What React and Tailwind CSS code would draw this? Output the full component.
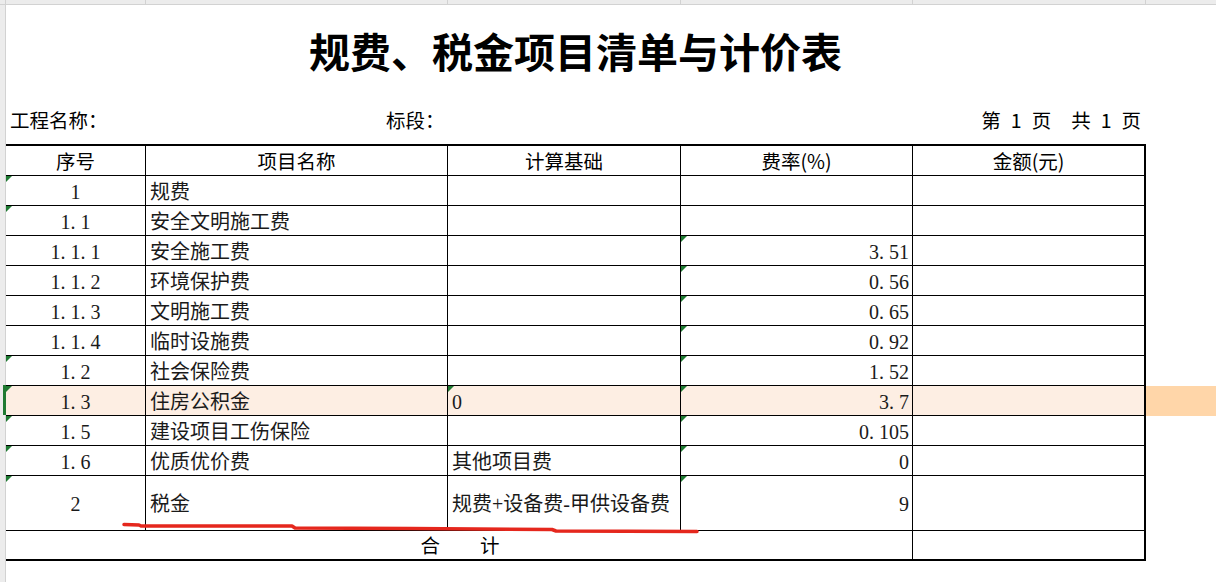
import React from 'react'

// column widths (each includes its right border)
const W = ['w-[140px]', 'w-[302px]', 'w-[233px]', 'w-[232px]', 'w-[233px]']

const rows = [
  { no: '1', name: '规费', tri: [0] },
  { no: '1.1', name: '安全文明施工费', tri: [0] },
  { no: '1.1.1', name: '安全施工费', rate: '3.51', tri: [3] },
  { no: '1.1.2', name: '环境保护费', rate: '0.56', tri: [3] },
  { no: '1.1.3', name: '文明施工费', rate: '0.65', tri: [3] },
  { no: '1.1.4', name: '临时设施费', rate: '0.92', tri: [3] },
  { no: '1.2', name: '社会保险费', rate: '1.52', tri: [0, 3] },
  { no: '1.3', name: '住房公积金', base: '0', rate: '3.7', tri: [0, 2, 3], hl: true },
  { no: '1.5', name: '建设项目工伤保险', rate: '0.105', tri: [0, 3] },
  { no: '1.6', name: '优质优价费', base: '其他项目费', rate: '0', tri: [0, 3] },
  { no: '2', name: '税金', base: '规费+设备费-甲供设备费', rate: '9', tri: [0, 3], tall: true },
]

// SimSun style numbers: every char sits in a half-width box
function Num({ v }) {
  return (
    <span className="inline-flex">
      {v.split('').map((c, i) =>
        c === '.' ? (
          <span key={i} className="inline-block w-[10px] text-left">.</span>
        ) : (
          <span key={i} className="inline-block w-[10px] text-center">{c}</span>
        )
      )}
    </span>
  )
}

function Tri() {
  return <span className="absolute left-0 top-0 h-0 w-0 border-t-[6px] border-r-[6px] border-t-[#1f7a32] border-r-transparent" />
}

function Cell({ i, tri, className = '', children }) {
  return (
    <div
      className={`relative flex h-full shrink-0 items-center border-b border-black ${W[i]} ${
        i === 4 ? 'border-r-2' : 'border-r'
      } ${className}`}
    >
      {tri && <Tri />}
      {children}
    </div>
  )
}

export default function App() {
  const sans = "font-['Noto_Sans_CJK_SC',sans-serif]"
  const serif = "font-['Liberation_Serif','Noto_Sans_CJK_SC',serif]"

  return (
    <div className="relative h-[582px] w-[1216px] overflow-hidden bg-white text-black">
      {/* sheet column header strip */}
      <div className="flex h-[5px] border-b border-[#d2d2d2] bg-[#ececec]">
        <div className="w-[6px] shrink-0 border-r border-[#d2d2d2]" />
        {W.map((w, i) => (
          <div key={i} className={`${w} shrink-0 border-r border-[#d2d2d2]`} />
        ))}
      </div>

      <div className="flex">
        {/* sheet row header strip */}
        <div className="relative h-[577px] w-[6px] shrink-0 border-r border-[#d2d2d2] bg-[#ececec]">
          <div className="absolute left-[3px] top-[380px] h-[30px] w-[3px] bg-[#1f7a32]" />
        </div>

        <div className="flex w-[1210px] flex-col">
          {/* title */}
          <div className="flex h-[90px] w-[1139px] items-center justify-center">
            <h1 className={`${sans} text-[41px] font-bold leading-none`}>规费、税金项目清单与计价表</h1>
          </div>

          {/* info line */}
          <div className={`${sans} flex h-[49px] w-[1139px] items-center text-[19.5px] leading-none`}>
            <span className="ml-[4px] w-[376px]">工程名称：</span>
            <span>标段：</span>
            <span className="ml-auto mr-[4px] flex items-center gap-[10px]">
              <span>第</span>
              <span>1</span>
              <span>页</span>
              <span className="ml-[10px]">共</span>
              <span>1</span>
              <span>页</span>
            </span>
          </div>

          {/* table header */}
          <div className={`${sans} flex h-[32px] text-[19.5px] leading-none`}>
            {['序号', '项目名称', '计算基础', '费率(%)', '金额(元)'].map((t, i) => (
              <Cell key={i} i={i} className="justify-center border-t-2 pt-[1px]">
                {t}
              </Cell>
            ))}
          </div>

          {/* table body */}
          {rows.map((r, k) => (
            <div
              key={k}
              className={`${serif} flex text-[20px] leading-none text-[#1a1a1a] ${r.tall ? 'h-[55px]' : 'h-[30px]'}`}
            >
              <Cell i={0} tri={r.tri.includes(0)} className={`justify-center pt-[2px] ${r.hl ? 'bg-[#fdeee3]' : ''}`}>
                <Num v={r.no} />
              </Cell>
              <Cell i={1} className={`pl-[4px] pt-[2px] ${r.hl ? 'bg-[#fdeee3]' : ''}`}>
                {r.name}
              </Cell>
              <Cell i={2} tri={r.tri.includes(2)} className={`pl-[4px] pt-[2px] ${r.hl ? 'bg-[#fdeee3]' : ''}`}>
                {r.base}
              </Cell>
              <Cell i={3} tri={r.tri.includes(3)} className={`justify-end pr-[3px] pt-[2px] ${r.hl ? 'bg-[#fdeee3]' : ''}`}>
                {r.rate && <Num v={r.rate} />}
              </Cell>
              <Cell i={4} className={r.hl ? 'bg-[#fdeee3]' : ''} />
              <div className={`h-full flex-1 ${r.hl ? 'bg-[#ffd6a9]' : ''}`} />
            </div>
          ))}

          {/* total */}
          <div className={`${sans} flex h-[30px] text-[19.5px] leading-none`}>
            <div className="flex h-full w-[907px] shrink-0 items-center justify-center gap-[40px] border-r border-b-2 border-black pl-[2px]">
              <span>合</span>
              <span>计</span>
            </div>
            <div className="h-full w-[233px] shrink-0 border-r-2 border-b-2 border-black" />
          </div>
        </div>
      </div>

      {/* red hand-drawn underline */}
      <svg className="pointer-events-none absolute left-0 top-0" width="1216" height="582">
        <polyline
          points="124,524.5 139,525 141,526 292,526 295,528 410,528.5 552,529.5 556,531 697,531.5"
          fill="none"
          stroke="#e5271d"
          strokeWidth="3.5"
          strokeLinecap="round"
          strokeLinejoin="round"
        />
      </svg>
    </div>
  )
}
